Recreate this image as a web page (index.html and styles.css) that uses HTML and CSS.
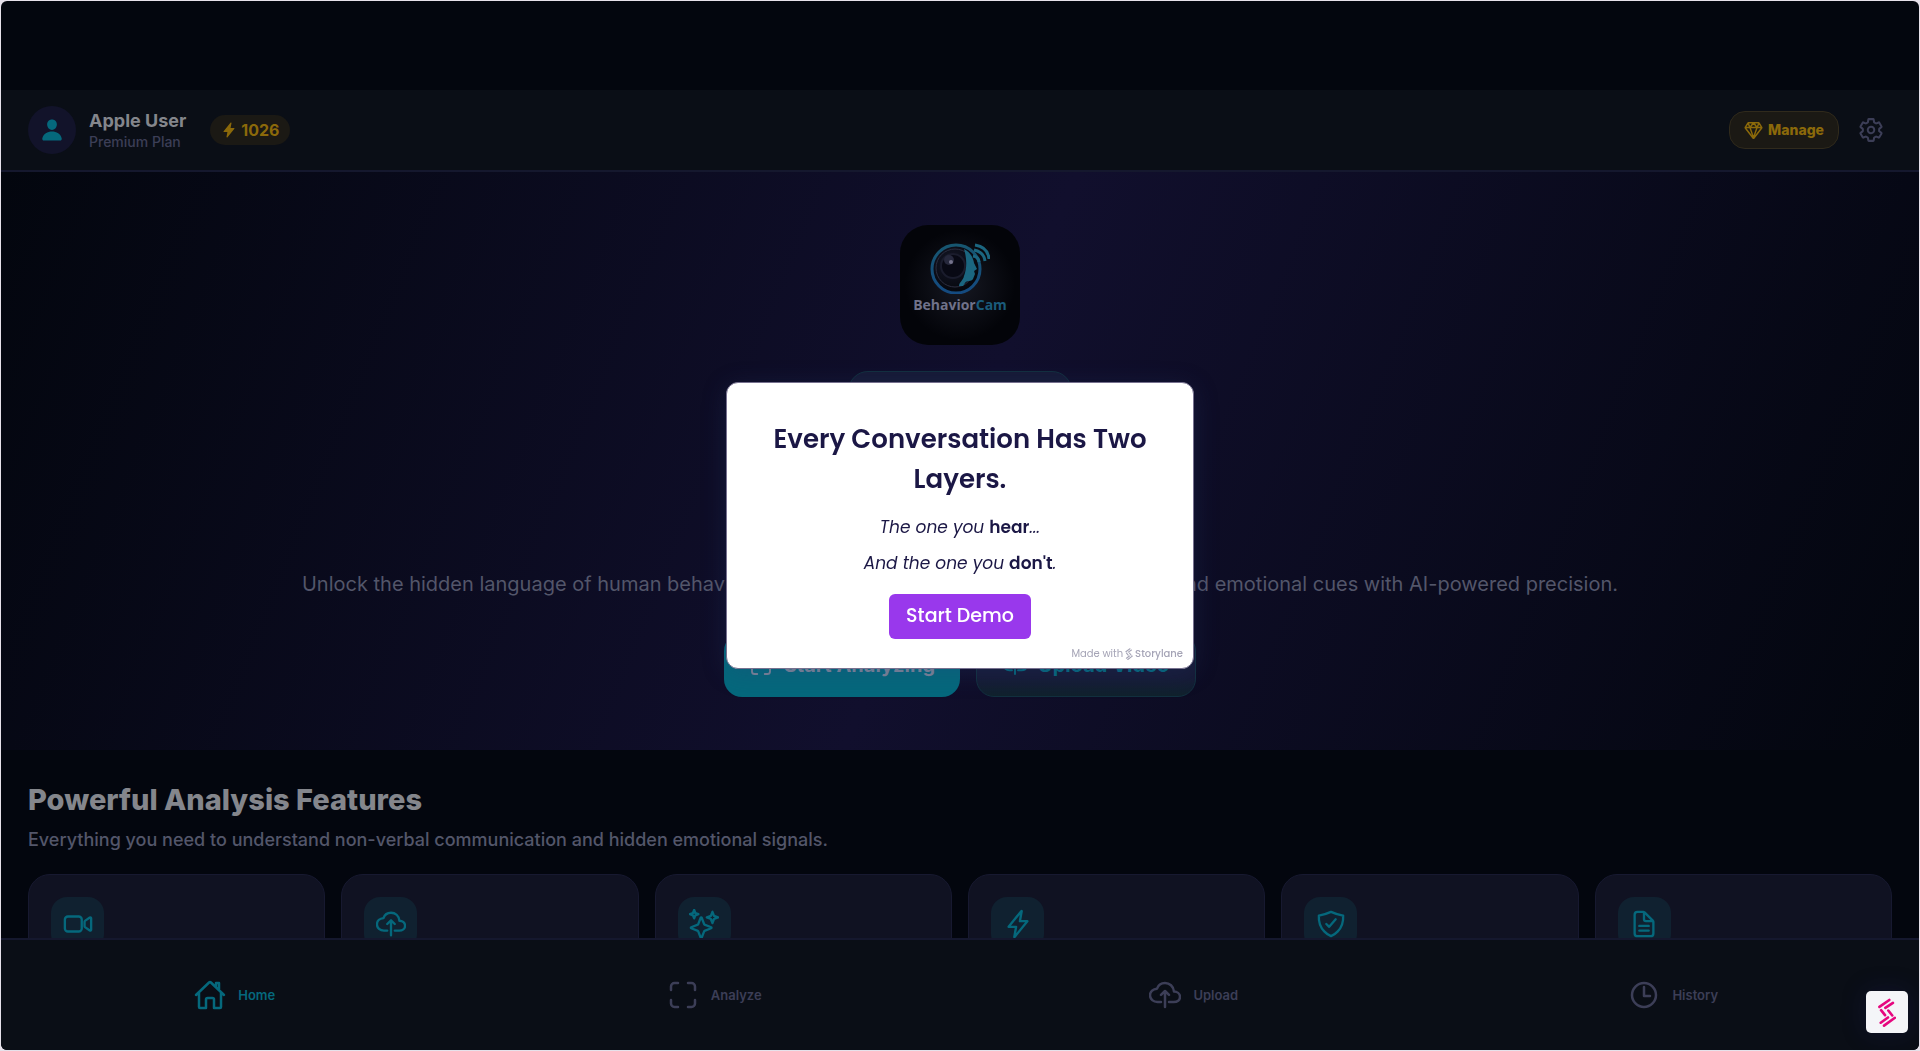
FILE: index.html
```html
<!DOCTYPE html>
<html lang="en">
<head>
    <meta charset="UTF-8">
    <meta name="viewport" content="width=device-width, initial-scale=1.0">
    <title>BehaviorCam</title>
    <link rel="stylesheet" href="styles.css">
</head>
<body>
    <svg class="sprite" aria-hidden="true">
        <symbol id="cloud" viewBox="0 0 512 512">
            <path d="M320 367.79h76c55 0 100-29.21 100-83.6s-53-81.47-96-83.6c-8.89-85.06-71-136.8-144-136.8-69 0-113.44 45.79-128 91.2-60 5.7-112 43.88-112 106.4s54 106.4 120 106.4h56M320 255.79l-64-64-64 64M256 448.21V207.79"/>
        </symbol>
        <symbol id="scan" viewBox="0 0 512 512">
            <path d="M336 448h56a56 56 0 0056-56v-56M448 176v-56a56 56 0 00-56-56h-56M176 448h-56a56 56 0 01-56-56v-56M64 176v-56a56 56 0 0156-56h56"/>
        </symbol>
        <symbol id="storylane" viewBox="0 0 54 88">
            <path d="M4 27L34 6M22 30L45 15M9 37l12 15M31 38l12 15M8 75l22-16M18 84l33-24"/>
        </symbol>
    </svg>

    <div class="app">
        <header class="header">
            <div class="avatar">
                <svg class="icon solid" viewBox="0 0 512 512"><path d="M332.64 64.58C313.18 43.57 286 32 256 32c-30.16 0-57.43 11.5-76.8 32.38-19.58 21.11-29.12 49.8-26.88 80.78C156.76 206.28 203.27 256 256 256s99.16-49.71 103.67-110.82c2.27-30.7-7.33-59.33-27.03-80.6zM432 480H80a31 31 0 01-24.2-11.13c-6.5-7.77-9.12-18.38-7.18-29.11C57.06 392.94 83.4 353.61 124.8 326c36.78-24.51 83.37-38 131.2-38s94.42 13.5 131.2 38c41.4 27.6 67.74 66.93 76.18 113.75 1.94 10.73-.68 21.34-7.18 29.11A31 31 0 01432 480z"/></svg>
            </div>
            <div class="user">
                <div class="user-name">Apple User</div>
                <div class="user-plan">Premium Plan</div>
            </div>
            <div class="credits">
                <svg class="icon solid" viewBox="0 0 512 512"><path d="M194.82 496a18.36 18.36 0 01-18.1-21.53v-.11L204.83 320H96a16 16 0 01-12.44-26.06L302.73 23a18.45 18.45 0 0132.8 13.71c0 .3-.08.59-.13.89L307.19 192H416a16 16 0 0112.44 26.06L209.24 489a18.45 18.45 0 01-14.42 7z"/></svg>
                <span>1026</span>
            </div>
            <button class="manage" type="button">
                <svg class="icon" viewBox="0 0 512 512"><path d="M35.42 188.21l207.75 269.46a16.17 16.17 0 0025.66 0l207.75-269.46a16.52 16.52 0 00.95-18.75L407.06 55.71A16.22 16.22 0 00393.27 48H118.73a16.22 16.22 0 00-13.79 7.71L34.47 169.46a16.52 16.52 0 00.95 18.75zM48 176h416M400 64l-48 112-96-128M112 64l48 112 96-128M256 448l-96-272M256 448l96-272"/></svg>
                Manage
            </button>
            <button class="settings" type="button" aria-label="Settings">
                <svg class="icon" viewBox="0 0 512 512"><path d="M262.29 192.31a64 64 0 1057.4 57.4 64.13 64.13 0 00-57.4-57.4zM416.39 256a154.34 154.34 0 01-1.53 20.79l45.21 35.46a10.81 10.81 0 012.45 13.75l-42.77 74a10.81 10.81 0 01-13.14 4.59l-44.9-18.08a16.11 16.11 0 00-15.17 1.75A164.48 164.48 0 01325 400.8a15.94 15.94 0 00-8.82 12.14l-6.73 47.89a11.08 11.08 0 01-10.68 9.17h-85.54a11.11 11.11 0 01-10.69-8.87l-6.72-47.82a16.07 16.07 0 00-9-12.22 155.3 155.3 0 01-21.46-12.57 16 16 0 00-15.11-1.71l-44.89 18.07a10.81 10.81 0 01-13.14-4.58l-42.77-74a10.8 10.8 0 012.45-13.75l38.21-30a16.05 16.05 0 006-14.08c-.36-4.17-.58-8.33-.58-12.5s.21-8.27.58-12.35a16 16 0 00-6.07-13.94l-38.19-30A10.81 10.81 0 0149.48 186l42.77-74a10.81 10.81 0 0113.14-4.59l44.9 18.08a16.11 16.11 0 0015.17-1.75A164.48 164.48 0 01187 111.2a15.94 15.94 0 008.82-12.14l6.73-47.89A11.08 11.08 0 01213.23 42h85.54a11.11 11.11 0 0110.69 8.87l6.72 47.82a16.07 16.07 0 009 12.22 155.3 155.3 0 0121.46 12.57 16 16 0 0015.11 1.71l44.89-18.07a10.81 10.81 0 0113.14 4.58l42.77 74a10.8 10.8 0 01-2.45 13.75l-38.21 30a16.05 16.05 0 00-6.05 14.08c.33 4.14.55 8.3.55 12.47z"/></svg>
            </button>
        </header>

        <main class="content">
            <section class="hero">
                <div class="logo">
                    <svg class="logo-mark" viewBox="0 0 60 52" aria-hidden="true">
                        <defs>
                            <radialGradient id="lens" cx="40%" cy="38%" r="60%">
                                <stop offset="0" stop-color="#30324a"/>
                                <stop offset=".35" stop-color="#10121f"/>
                                <stop offset="1" stop-color="#05070d"/>
                            </radialGradient>
                            <linearGradient id="ring" x1="0" y1="0" x2="0" y2="1">
                                <stop offset="0" stop-color="#175670"/>
                                <stop offset="1" stop-color="#144a80"/>
                            </linearGradient>
                        </defs>
                        <circle cx="26" cy="27" r="24" fill="url(#lens)" stroke="url(#ring)" stroke-width="3"/>
                        <circle cx="25" cy="26" r="19" fill="none" stroke="#2c2e40" stroke-width="1"/>
                        <circle cx="23" cy="24" r="12" fill="#080914" stroke="#1a1c2c" stroke-width="2"/>
                        <circle cx="19" cy="18" r="5" fill="#26283c"/>
                        <circle cx="21" cy="20" r="2" fill="#75738c"/>
                        <path d="M34 7c6 3 9 8 10 14l3 6-3 2 1 3-2 5c-2 3-6 1-8 4l-2 3h-4c0-4 4-5 5-10 3-8 3-17 0-27z" fill="#1b6680"/>
                        <path d="M43 14q6 1 6 6M44 8q10 2 11 11M45 3q13 2 14 14" fill="none" stroke="#1b6680" stroke-width="3"/>
                    </svg>
                    <div class="logo-name">Behavior<span>Cam</span></div>
                </div>
                <div class="badge"></div>
                <p class="hero-text">Unlock the hidden language of human behavior. Analyze facial expressions, body language, and emotional cues with AI-powered precision.</p>
                <div class="hero-actions">
                    <button class="btn btn-primary" type="button"><svg class="icon"><use href="#scan"/></svg>Start Analyzing</button>
                    <button class="btn btn-outline" type="button"><svg class="icon"><use href="#cloud"/></svg>Upload Video</button>
                </div>
            </section>

            <section class="features">
                <h2>Powerful Analysis Features</h2>
                <p>Everything you need to understand non-verbal communication and hidden emotional signals.</p>
                <div class="cards">
                    <div class="card"><div class="card-icon">
                        <svg class="icon" viewBox="0 0 512 512"><path d="M374.79 308.78L457.5 367a16 16 0 0022.5-14.62V159.62A16 16 0 00457.5 145l-82.71 58.22A16 16 0 00368 216.3v79.4a16 16 0 006.79 13.08zM268 384H84a52.15 52.15 0 01-52-52V180a52.15 52.15 0 0152-52h184.48A51.68 51.68 0 01320 179.52V332a52.15 52.15 0 01-52 52z"/></svg>
                    </div></div>
                    <div class="card"><div class="card-icon">
                        <svg class="icon"><use href="#cloud"/></svg>
                    </div></div>
                    <div class="card"><div class="card-icon">
                        <svg class="icon" viewBox="0 0 512 512"><path d="M259.92 262.91L216.4 149.77a9 9 0 00-16.8 0l-43.52 113.14a9 9 0 01-5.17 5.17L37.77 311.6a9 9 0 000 16.8l113.14 43.52a9 9 0 015.17 5.17l43.52 113.14a9 9 0 0016.8 0l43.52-113.14a9 9 0 015.17-5.17l113.14-43.52a9 9 0 000-16.8l-113.14-43.52a9 9 0 01-5.17-5.17zM108 68L88 16 68 68 16 88l52 20 20 52 20-52 52-20-52-20zM426.67 117.33L400 48l-26.67 69.33L304 144l69.33 26.67L400 240l26.67-69.33L496 144l-69.33-26.67z"/></svg>
                    </div></div>
                    <div class="card"><div class="card-icon">
                        <svg class="icon" viewBox="0 0 512 512"><path d="M315.27 33L96 304h128l-31.51 173.23a2.36 2.36 0 002.33 2.77h0a2.36 2.36 0 001.89-.95L416 208H288l31.66-173.25a2.45 2.45 0 00-2.44-2.75h0a2.42 2.42 0 00-1.95 1z"/></svg>
                    </div></div>
                    <div class="card"><div class="card-icon">
                        <svg class="icon" viewBox="0 0 512 512"><path d="M336 176L225.2 304 176 255.8M463.1 112.37C373.68 96.33 336.71 84.45 256 48c-80.71 36.45-117.68 48.33-207.1 64.37C32.7 369.13 240.58 457.79 256 464c15.42-6.21 223.3-94.87 207.1-351.63z"/></svg>
                    </div></div>
                    <div class="card"><div class="card-icon">
                        <svg class="icon" viewBox="0 0 512 512"><path d="M416 221.25V416a48 48 0 01-48 48H144a48 48 0 01-48-48V96a48 48 0 0148-48h98.75a32 32 0 0122.62 9.37l141.26 141.26a32 32 0 019.37 22.62zM256 56v120a32 32 0 0032 32h120M176 288h160M176 368h160"/></svg>
                    </div></div>
                </div>
            </section>
        </main>

        <nav class="tabs">
            <a class="tab active" href="#">
                <svg class="icon" viewBox="0 0 512 512"><path d="M80 212v236a16 16 0 0016 16h96V328a24 24 0 0124-24h80a24 24 0 0124 24v136h96a16 16 0 0016-16V212M480 256L266.89 52c-5-5.28-16.69-5.34-21.78 0L32 256M400 179V64h-48v69"/></svg>
                Home
            </a>
            <a class="tab" href="#"><svg class="icon"><use href="#scan"/></svg>Analyze</a>
            <a class="tab" href="#"><svg class="icon"><use href="#cloud"/></svg>Upload</a>
            <a class="tab" href="#">
                <svg class="icon" viewBox="0 0 512 512"><path d="M256 64C150 64 64 150 64 256s86 192 192 192 192-86 192-192S362 64 256 64zM256 128v144h96"/></svg>
                History
            </a>
        </nav>
    </div>

    <div class="overlay">
        <div class="modal" role="dialog" aria-labelledby="modalTitle">
            <h1 id="modalTitle">Every Conversation Has Two Layers.</h1>
            <p><em>The one you </em><strong>hear</strong><em>...</em></p>
            <p><em>And the one you </em><strong>don't</strong><em>.</em></p>
            <button class="start-demo" type="button">Start Demo</button>
            <a class="made-with" href="#">Made with <svg class="storylane"><use href="#storylane"/></svg><b>Storylane</b></a>
        </div>
    </div>

    <button class="widget" type="button" aria-label="Storylane"><svg class="storylane"><use href="#storylane"/></svg></button>
</body>
</html>
```
FILE: styles.css
```css
:root {
    --bg: #03060e;
    --surface: #0a0e16;
    --line: #15182e;
    --cyan: #05687c;
    --gold: #8b690a;
    --light: #84868c;
    --muted: #3c3e57;
    --soft: #53566a;
    --navy: #1b1745;
}

* {
    box-sizing: border-box;
    margin: 0;
    padding: 0;
}

body {
    height: 100vh;
    overflow: hidden;
    background: #e6e1ea;
    font-family: Inter, sans-serif;
    padding: 1px;
}

button {
    font-family: inherit;
    border: none;
    background: none;
    cursor: pointer;
}

a {
    color: inherit;
    text-decoration: none;
}

.sprite {
    display: none;
}

.icon {
    flex: none;
    fill: none;
    stroke: currentColor;
    stroke-width: 40;
    stroke-linecap: round;
    stroke-linejoin: round;
}

.icon.solid {
    fill: currentColor;
    stroke: none;
}

.app {
    display: flex;
    flex-direction: column;
    height: 100%;
    padding-top: 89px;
    background: var(--bg);
    border-radius: 6px;
    overflow: hidden;
}

/* header */
.header {
    display: flex;
    align-items: center;
    flex: none;
    padding: 16px 27px;
    background: var(--surface);
    border-bottom: 2px solid var(--line);
}

.avatar {
    display: flex;
    align-items: center;
    justify-content: center;
    width: 48px;
    height: 48px;
    border-radius: 50%;
    background: #12132a;
    color: var(--cyan);
    margin-right: 13px;
}

.avatar .icon {
    width: 24px;
    height: 24px;
}

.user {
    padding-top: 2px;
}

.user-name {
    font-size: 18px;
    line-height: 22px;
    font-weight: 700;
    color: var(--light);
}

.user-plan {
    font-size: 14px;
    line-height: 20px;
    font-weight: 500;
    color: var(--muted);
}

.credits {
    display: flex;
    align-items: center;
    gap: 4px;
    margin-left: 24px;
    padding: 5px 11px;
    border-radius: 15px;
    background: #1b1914;
    color: var(--gold);
    font-size: 16px;
    line-height: 20px;
    font-weight: 700;
}

.credits .icon {
    width: 16px;
    height: 16px;
}

.manage {
    display: flex;
    align-items: center;
    gap: 5px;
    margin-left: auto;
    padding: 8px 14px;
    border: 1px solid #302a1c;
    border-radius: 16px;
    background: #1b1914;
    color: var(--gold);
    font-size: 14px;
    line-height: 20px;
    font-weight: 800;
}

.manage .icon {
    width: 19px;
    height: 19px;
}

.settings {
    display: flex;
    margin-left: 11px;
    padding: 8px;
    color: var(--muted);
}

.settings .icon {
    width: 26px;
    height: 26px;
}

/* hero */
.content {
    flex: 1;
    min-height: 0;
    overflow: hidden;
}

.hero {
    display: flex;
    flex-direction: column;
    align-items: center;
    padding: 53px 27px;
    background: linear-gradient(112deg, var(--bg), #110f2d 50%, var(--bg));
}

.logo {
    display: flex;
    flex-direction: column;
    align-items: center;
    width: 120px;
    height: 120px;
    padding-top: 17px;
    border-radius: 28px;
    background: radial-gradient(circle, #161822, #030409 65%);
}

.logo-mark {
    width: 60px;
    height: 52px;
}

.logo-name {
    font-family: "Open Sans", sans-serif;
    font-size: 14px;
    line-height: 22px;
    font-weight: 700;
    color: #70728a;
}

.logo-name span {
    color: #1a5b7b;
}

.badge {
    width: 224px;
    height: 44px;
    margin: 26px 0 154px;
    border: 1px solid #12303f;
    border-radius: 20px;
    background: #161a36;
}

.hero-text {
    font-size: 20px;
    line-height: 30px;
    color: var(--soft);
    text-align: center;
}

.hero-actions {
    display: flex;
    gap: 16px;
    margin-top: 34px;
}

.btn {
    display: flex;
    align-items: center;
    gap: 11px;
    padding: 20px 25px;
    border-radius: 18px;
    font-size: 20px;
    line-height: 24px;
    font-weight: 700;
}

.btn .icon {
    width: 24px;
    height: 24px;
}

.btn-primary {
    background: var(--cyan);
    color: #7d8598;
}

.btn-outline {
    border: 1px solid #12303f;
    padding: 19px 26px;
    background: linear-gradient(#161a36 70%, #10222d);
    color: var(--cyan);
}

/* features */
.features {
    padding: 31px 27px;
}

.features h2 {
    font-size: 29px;
    line-height: 38px;
    font-weight: 800;
    color: var(--light);
}

.features p {
    margin-top: 7px;
    font-size: 18px;
    line-height: 28px;
    font-weight: 500;
    color: var(--soft);
}

.cards {
    display: grid;
    grid-template-columns: repeat(6, 1fr);
    gap: 16px;
    margin-top: 20px;
}

.card {
    min-height: 220px;
    padding: 22px;
    border: 1px solid #171930;
    border-radius: 22px;
    background: #101222;
}

.card-icon {
    display: flex;
    align-items: center;
    justify-content: center;
    width: 53px;
    height: 53px;
    border-radius: 16px;
    background: #102130;
    color: var(--cyan);
}

.card-icon .icon {
    width: 30px;
    height: 30px;
}

/* bottom tabs */
.tabs {
    display: flex;
    flex: none;
    background: var(--surface);
    border-top: 2px solid var(--line);
}

.tab {
    display: flex;
    flex: 1;
    align-items: center;
    justify-content: center;
    gap: 12px;
    padding: 39px 12px 39px 0;
    color: var(--muted);
    font-size: 13px;
    line-height: 20px;
    font-weight: 600;
}

.tab.active {
    color: var(--cyan);
}

.tab .icon {
    width: 32px;
    height: 32px;
}

/* demo dialog */
.overlay {
    position: fixed;
    inset: 0;
    display: flex;
    align-items: center;
    justify-content: center;
}

.modal {
    display: flex;
    flex-direction: column;
    align-items: center;
    width: 468px;
    padding: 36px 10px 6px;
    border: 1px solid #77718f;
    border-radius: 12px;
    background: #fff;
    box-shadow: 0 4px 24px rgba(40, 60, 120, 0.25);
    color: var(--navy);
    font-family: Poppins, Inter, sans-serif;
    text-align: center;
}

.modal h1 {
    max-width: 400px;
    margin-bottom: 16px;
    font-size: 26px;
    line-height: 40px;
    font-weight: 600;
}

.modal p {
    margin-bottom: 12px;
    font-size: 17px;
    line-height: 24px;
}

.modal strong {
    font-weight: 600;
}

.start-demo {
    margin-top: 7px;
    padding: 8px 17px 9px;
    border-radius: 6px;
    background: #9938ec;
    color: #fff;
    font-size: 19px;
    line-height: 28px;
    font-weight: 500;
}

.made-with {
    display: flex;
    align-items: center;
    align-self: flex-end;
    gap: 2px;
    margin-top: 7px;
    color: #a5a4b6;
    font-size: 10px;
    line-height: 16px;
}

.made-with b {
    font-weight: 500;
}

.storylane {
    fill: none;
    stroke: currentColor;
    stroke-width: 8;
    stroke-linecap: round;
}

.made-with .storylane {
    width: 8px;
    height: 12px;
}

.widget {
    position: fixed;
    right: 12px;
    bottom: 18px;
    display: flex;
    align-items: center;
    justify-content: center;
    width: 42px;
    height: 42px;
    border-radius: 5px;
    background: #f4f5f8;
    box-shadow: 0 0 24px rgba(30, 30, 110, 0.25);
    color: #e6077f;
}

.widget .storylane {
    width: 18px;
    height: 29px;
}
```
